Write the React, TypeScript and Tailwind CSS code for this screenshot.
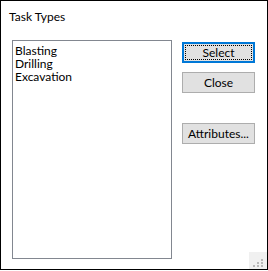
import React from "react";

const font = { fontFamily: '"Segoe UI", Lato, "Noto Sans", sans-serif' };

function Btn({ label, focused }: { label: string; focused?: boolean }) {
  if (focused) {
    return (
      <div className="w-[73px] h-[21px] border-2 border-[#0078d7] bg-[#e1e1e1] p-px">
        <div className="w-full h-full border border-dotted border-black flex items-center justify-center text-[12px] leading-none text-black">
          {label}
        </div>
      </div>
    );
  }
  return (
    <div className="w-[73px] h-[21px] border border-[#adadad] bg-[#e1e1e1] flex items-center justify-center text-[12px] leading-none text-black">
      {label}
    </div>
  );
}

export default function App() {
  return (
    <div className="w-[268px] h-[271px] bg-white" style={font}>
      <div className="relative w-[268px] h-[270px] border border-black bg-white flex flex-col">
        <div className="pl-[8px] pt-[8px] h-[39px] text-[12px] leading-[15px] text-black">Task Types</div>
        <div className="flex">
          <div className="ml-[11px] w-[160px] h-[219px] border border-[#828790] bg-white pl-[2px] pt-[3px] text-[12px] leading-[13px] text-black">
            <div className="h-[13px]">Blasting</div>
            <div className="h-[13px]">Drilling</div>
            <div className="h-[13px]">Excavation</div>
          </div>
          <div className="ml-[10px] pt-[2px] flex flex-col">
            <Btn label="Select" focused />
            <div className="h-[9px]" />
            <Btn label="Close" />
            <div className="h-[30px]" />
            <Btn label="Attributes..." />
          </div>
        </div>
        <div className="absolute right-0 bottom-0 w-[18px] h-[17px] bg-[#f0f0f0]">
          <svg width="18" height="17" viewBox="0 0 18 17">
            <g fill="#b8b8b8">
              <rect x="12" y="7" width="2" height="2" />
              <rect x="8" y="10" width="2" height="2" />
              <rect x="12" y="10" width="2" height="2" />
              <rect x="4" y="13" width="2" height="2" />
              <rect x="8" y="13" width="2" height="2" />
              <rect x="12" y="13" width="2" height="2" />
            </g>
          </svg>
        </div>
      </div>
    </div>
  );
}
